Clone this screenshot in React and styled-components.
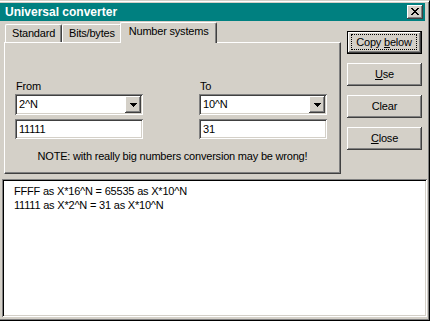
import React from 'react';
import styled, { createGlobalStyle, css } from 'styled-components';

const GlobalStyle = createGlobalStyle`
    html, body {
        margin: 0;
        padding: 0;
        background: #d4d0c8;
    }
    body {
        font-family: "Liberation Sans", Arial, sans-serif;
        font-size: 11px;
        color: #000;
    }
`;

const raised = css`
    box-shadow: inset -1px -1px #404040, inset 1px 1px #fff, inset -2px -2px #808080, inset 2px 2px #d4d0c8;
`;
const sunken = css`
    box-shadow: inset 1px 1px #808080, inset -1px -1px #fff, inset 2px 2px #404040, inset -2px -2px #d4d0c8;
`;
const uiText = css`
    font-family: "Liberation Sans", Arial, sans-serif;
    font-size: 11px;
    letter-spacing: -0.2px;
    color: #000;
`;

const CROSS = ['11000011', '01100110', '00111100', '00011000', '00111100', '01100110', '11000011'];
const ARROW = [7, 5, 3, 1];

function CloseGlyph() {
    return (
        <svg width="8" height="7" shapeRendering="crispEdges">
            {CROSS.flatMap((row, y) =>
                row.split('').map((c, x) => c === '1' ? <rect key={`${x}-${y}`} x={x} y={y} width="1" height="1" fill="#000" /> : null)
            )}
        </svg>
    );
}

function DownArrow() {
    return (
        <svg width="7" height="4" shapeRendering="crispEdges">
            {ARROW.map((w, y) => <rect key={y} x={(7 - w) / 2} y={y} width={w} height="1" fill="#000" />)}
        </svg>
    );
}

function Combo({ value }) {
    return (
        <ComboBox>
            <FieldText>{value}</FieldText>
            <DropButton><DownArrow /></DropButton>
        </ComboBox>
    );
}

function PushButton({ isDefault, children }) {
    return (
        <Button $default={isDefault}>
            <Focus $on={isDefault}><Caption>{children}</Caption></Focus>
        </Button>
    );
}

export default function App() {
    const tabs = ['Standard', 'Bits/bytes', 'Number systems'];
    return (
        <>
            <GlobalStyle />
            <Window>
                <TitleBar>
                    <Title>Universal converter</Title>
                    <CaptionButton><CloseGlyph /></CaptionButton>
                </TitleBar>
                <TopRow>
                    <TabControl>
                        <TabStrip>
                            {tabs.map((t, i) => (
                                <Tab key={t} $active={i === 2}>{t}</Tab>
                            ))}
                        </TabStrip>
                        <Panel>
                            <FieldGrid>
                                <Label>From</Label>
                                <Label>To</Label>
                                <Combo value="2^N" />
                                <Combo value="10^N" />
                                <TextField>11111</TextField>
                                <TextField>31</TextField>
                            </FieldGrid>
                            <Note>NOTE: with really big numbers conversion may be wrong!</Note>
                        </Panel>
                    </TabControl>
                    <ButtonColumn>
                        <PushButton isDefault>Copy <u>b</u>elow</PushButton>
                        <PushButton><u>U</u>se</PushButton>
                        <PushButton>Clear</PushButton>
                        <PushButton><u>C</u>lose</PushButton>
                    </ButtonColumn>
                </TopRow>
                <Output>
                    <OutputLine>FFFF as X*16^N = 65535 as X*10^N</OutputLine>
                    <OutputLine>11111 as X*2^N = 31 as X*10^N</OutputLine>
                </Output>
            </Window>
        </>
    );
}

const Window = styled.div`
    box-sizing: border-box;
    width: 430px;
    height: 321px;
    background: #d4d0c8;
    border-top: 1px solid #d4d0c8;
    border-right: 1px solid #000;
    border-bottom: 1px solid #000;
    box-shadow: inset 0 1px #fff, inset -1px -1px #808080;
    padding: 2px 2px 3px 0;
    display: flex;
    flex-direction: column;
`;
const TitleBar = styled.div`
    height: 18px;
    margin-right: 2px;
    background: #008080;
    display: flex;
    align-items: center;
    justify-content: space-between;
    padding: 0 2px 0 5px;
`;
const Title = styled.span`
    font-family: "Liberation Sans", Arial, sans-serif;
    font-weight: bold;
    font-size: 12px;
    line-height: 18px;
    color: #fff;
`;
const CaptionButton = styled.div`
    box-sizing: border-box;
    width: 16px;
    height: 14px;
    background: #d4d0c8;
    ${raised}
    display: flex;
    align-items: center;
    justify-content: center;
    padding: 0 1px 1px 0;
`;
const TopRow = styled.div`
    display: flex;
    margin: 1px 0 0 4px;
`;
const TabControl = styled.div`
    width: 337px;
    display: flex;
    flex-direction: column;
`;
const TabStrip = styled.div`
    height: 20px;
    display: flex;
    align-items: flex-start;
    padding-left: 1px;
`;
const Tab = styled.div`
    ${uiText}
    position: relative;
    box-sizing: border-box;
    height: 18px;
    margin-top: 2px;
    padding: 2px 6px 0 6px;
    line-height: 13px;
    white-space: nowrap;
    background: #d4d0c8;
    border-top: 1px solid #fff;
    border-left: 1px solid #fff;
    border-right: 1px solid #404040;
    border-radius: 2px 2px 0 0;
    box-shadow: inset -1px 0 #808080;
    ${p => p.$active && css`
        z-index: 1;
        height: 21px;
        margin: 0 -2px -1px -2px;
        padding: 2px 8px 0 8px;
    `}
`;
const Panel = styled.div`
    box-sizing: border-box;
    height: 132px;
    border-top: 1px solid #fff;
    border-left: 1px solid #fff;
    border-right: 1px solid #404040;
    border-bottom: 1px solid #404040;
    box-shadow: inset -1px -1px #808080;
    padding: 37px 0 0 10px;
    display: flex;
    flex-direction: column;
`;
const FieldGrid = styled.div`
    display: grid;
    grid-template-columns: 128px 128px;
    column-gap: 56px;
`;
const Label = styled.div`
    ${uiText}
    line-height: 13px;
    padding-left: 1px;
    margin-bottom: 1px;
`;
const ComboBox = styled.div`
    box-sizing: border-box;
    height: 21px;
    background: #fff;
    ${sunken}
    padding: 2px;
    display: flex;
    align-items: center;
    margin-bottom: 4px;
`;
const FieldText = styled.span`
    ${uiText}
    flex: 1;
    padding-left: 2px;
    line-height: 13px;
`;
const DropButton = styled.div`
    box-sizing: border-box;
    width: 16px;
    height: 17px;
    background: #d4d0c8;
    ${raised}
    display: flex;
    align-items: center;
    justify-content: center;
`;
const TextField = styled.div`
    ${uiText}
    box-sizing: border-box;
    height: 20px;
    background: #fff;
    ${sunken}
    padding: 0 4px;
    line-height: 20px;
`;
const Note = styled.div`
    ${uiText}
    line-height: 13px;
    margin: 11px 10px 0 0;
    text-align: center;
`;
const ButtonColumn = styled.div`
    display: flex;
    flex-direction: column;
    gap: 9px;
    margin: 9px 0 0 6px;
`;
const Button = styled.div`
    ${uiText}
    box-sizing: border-box;
    width: 75px;
    height: 23px;
    background: #d4d0c8;
    ${raised}
    display: flex;
    padding: 3px 4px 4px 4px;
    ${p => p.$default && css`
        border: 1px solid #000;
        padding: 2px 4px 3px 3px;
    `}
`;
const Focus = styled.span`
    flex: 1;
    display: flex;
    align-items: center;
    justify-content: center;
    border: 1px dotted ${p => (p.$on ? '#000' : 'transparent')};
`;
const Caption = styled.span`
    line-height: 13px;
    white-space: nowrap;
    u {
        text-decoration: underline;
        text-underline-offset: 1px;
    }
`;
const Output = styled.div`
    flex: 1;
    margin: 5px 0 0 2px;
    background: #fff;
    box-shadow: inset 1px 1px #808080, inset -1px -1px #fff, inset 2px 2px #000, inset -2px -2px #d4d0c8;
    padding: 5px 12px;
`;
const OutputLine = styled.div`
    ${uiText}
    line-height: 14px;
`;
